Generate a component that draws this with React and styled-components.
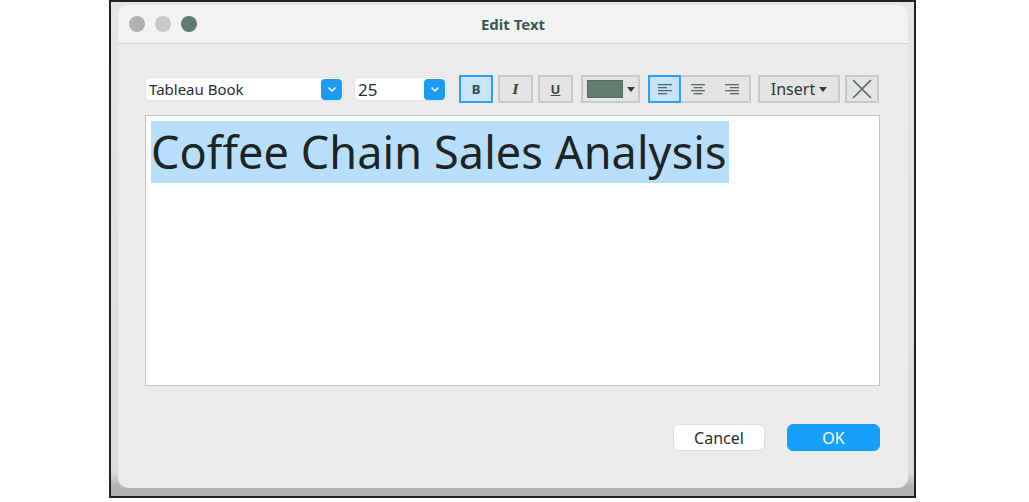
import React from "react";
import styled, { createGlobalStyle } from "styled-components";

const GlobalStyle = createGlobalStyle`
  body {
    margin: 0;
    background: #ffffff;
    font-family: "Noto Sans", "Open Sans", sans-serif;
  }
`;

const Page = styled.div`
  width: 1029px;
  height: 502px;
  padding-left: 109px;
  box-sizing: border-box;
  background: #ffffff;
`;

const Frame = styled.div`
  width: 807px;
  height: 498px;
  box-sizing: border-box;
  border: 2px solid #1f2322;
  padding: 3px 6px 8px 7px;
  background: linear-gradient(to bottom, #e6e6e6 0, #dcdcdc 470px, #b3b3b3 484px, #b3b3b3 100%);
`;

const Window = styled.div`
  height: 100%;
  border-radius: 10px;
  background: #ececec;
  overflow: hidden;
  display: flex;
  flex-direction: column;
`;

const TitleBar = styled.div`
  height: 38px;
  flex-shrink: 0;
  background: #f3f3f3;
  border-bottom: 1px solid #d2d2d2;
  display: flex;
  align-items: center;
  padding-left: 11px;
  position: relative;
`;

const Lights = styled.div`
  display: flex;
  gap: 10px;
`;

const Light = styled.span`
  width: 16px;
  height: 16px;
  border-radius: 50%;
  background: ${(p) => p.color};
`;

const Title = styled.div`
  position: absolute;
  left: 0;
  right: 0;
  text-align: center;
  font-size: 15px;
  font-weight: 700;
  color: #3b5a4f;
  pointer-events: none;
`;

const Body = styled.div`
  flex: 1;
  display: flex;
  flex-direction: column;
  padding: 31px 28px 0 27px;
`;

const Toolbar = styled.div`
  display: flex;
  align-items: center;
  height: 28px;
`;

const Select = styled.div`
  width: ${(p) => p.width}px;
  height: 24px;
  box-sizing: border-box;
  background: #ffffff;
  border-radius: 5px;
  border: 1px solid #e2e2e2;
  display: flex;
  align-items: center;
  justify-content: space-between;
  padding: 0 1px 0 3px;
  margin-right: ${(p) => p.gap}px;
  font-size: ${(p) => p.size || 15}px;
  color: #27302c;
`;

const Chevron = styled.span`
  width: 21px;
  height: 21px;
  border-radius: 4px;
  background: #1a9cf6;
  display: flex;
  align-items: center;
  justify-content: center;
`;

const ToolButton = styled.button`
  width: ${(p) => p.width || 35}px;
  height: 28px;
  box-sizing: border-box;
  margin: 0 ${(p) => p.gap || 0}px 0 0;
  padding: 0;
  border: 2px solid ${(p) => (p.active ? "#2f9ff4" : "#c9c9c9")};
  background: ${(p) => (p.active ? "#c6e4fb" : "#e4e4e4")};
  display: flex;
  align-items: center;
  justify-content: center;
  gap: 4px;
  font-family: "Noto Sans", sans-serif;
  font-size: 16px;
  color: #2c3a34;
`;

const Glyph = styled.span`
  font-size: 13px;
  font-weight: ${(p) => (p.bold ? 700 : 400)};
  font-style: ${(p) => (p.italic ? "italic" : "normal")};
  text-decoration: ${(p) => (p.underline ? "underline" : "none")};
  font-family: ${(p) => (p.italic ? '"DejaVu Serif", serif' : '"Noto Sans", sans-serif')};
  color: #3a4a44;
`;

const Swatch = styled.span`
  width: 36px;
  height: 18px;
  background: #607d70;
  border: 1px solid #55695f;
  box-sizing: border-box;
`;

const AlignGroup = styled.div`
  display: flex;
  height: 28px;
  box-sizing: border-box;
  border: 2px solid #c9c9c9;
  background: #e4e4e4;
  margin-right: 7px;
`;

const AlignCell = styled.span`
  width: ${(p) => (p.first ? 33 : 34)}px;
  height: 28px;
  margin: -2px 0;
  margin-left: ${(p) => (p.first ? "-2px" : "0")};
  box-sizing: border-box;
  display: flex;
  align-items: center;
  justify-content: center;
  border: 2px solid ${(p) => (p.active ? "#2f9ff4" : "transparent")};
  background: ${(p) => (p.active ? "#c6e4fb" : "transparent")};
`;

const Editor = styled.div`
  margin-top: 12px;
  height: 271px;
  box-sizing: border-box;
  background: #ffffff;
  border: 1px solid #c4c4c4;
  padding: 5px 5px;
`;

const Selected = styled.span`
  display: inline-block;
  background: #b7dffb;
  font-family: "Noto Sans", sans-serif;
  font-size: 45px;
  line-height: 62px;
  letter-spacing: 0.1px;
  color: #1f2422;
  padding-right: 2px;
`;

const Footer = styled.div`
  display: flex;
  justify-content: flex-end;
  gap: 22px;
  margin-top: 38px;
`;

const DialogButton = styled.button`
  width: ${(p) => p.width}px;
  height: 27px;
  border-radius: 6px;
  border: 1px solid ${(p) => (p.primary ? "#16a0fb" : "#dedede")};
  background: ${(p) => (p.primary ? "#16a0fb" : "#ffffff")};
  color: ${(p) => (p.primary ? "#ffffff" : "#27302c")};
  font-family: "Noto Sans", sans-serif;
  font-size: 16px;
  padding: 0;
`;

const ChevronIcon = () => (
  <svg width="10" height="7" viewBox="0 0 10 7">
    <path d="M2 2 L5 5 L8 2" stroke="#fff" strokeWidth="1.6" fill="none" strokeLinecap="round" strokeLinejoin="round" />
  </svg>
);

const Caret = () => (
  <svg width="8" height="5" viewBox="0 0 8 5">
    <path d="M0 0 H8 L4 5 Z" fill="#2c3a34" />
  </svg>
);

const AlignIcon = ({ type }) => {
  const rows = [
    { w: 14, y: 1 },
    { w: 9, y: 4 },
    { w: 14, y: 7 },
    { w: 9, y: 10 },
  ];
  return (
    <svg width="14" height="12" viewBox="0 0 14 12">
      {rows.map((r, i) => {
        const x = type === "left" ? 0 : type === "center" ? (14 - r.w) / 2 : 14 - r.w;
        return <rect key={i} x={x} y={r.y} width={r.w} height="1.3" fill="#5b6a63" />;
      })}
    </svg>
  );
};

const CloseIcon = () => (
  <svg width="22" height="20" viewBox="0 0 22 20">
    <path d="M2 1 L20 19 M20 1 L2 19" stroke="#55665e" strokeWidth="1.7" fill="none" />
  </svg>
);

export default function App() {
  return (
    <Page>
      <GlobalStyle />
      <Frame>
        <Window>
          <TitleBar>
            <Lights>
              <Light color="#b1b1b1" />
              <Light color="#c9c9c9" />
              <Light color="#5f7c6f" />
            </Lights>
            <Title>Edit Text</Title>
          </TitleBar>
          <Body>
            <Toolbar>
              <Select width={199} gap={10}>
                <span>Tableau Book</span>
                <Chevron><ChevronIcon /></Chevron>
              </Select>
              <Select width={93} gap={12} size={17}>
                <span>25</span>
                <Chevron><ChevronIcon /></Chevron>
              </Select>
              <ToolButton active width={34} gap={5}><Glyph bold>B</Glyph></ToolButton>
              <ToolButton gap={5}><Glyph italic bold>I</Glyph></ToolButton>
              <ToolButton gap={8}><Glyph underline bold>U</Glyph></ToolButton>
              <ToolButton width={59} gap={8}>
                <Swatch />
                <Caret />
              </ToolButton>
              <AlignGroup>
                <AlignCell first active><AlignIcon type="left" /></AlignCell>
                <AlignCell><AlignIcon type="center" /></AlignCell>
                <AlignCell><AlignIcon type="right" /></AlignCell>
              </AlignGroup>
              <ToolButton width={82} gap={5}>
                <span>Insert</span>
                <Caret />
              </ToolButton>
              <ToolButton width={34}><CloseIcon /></ToolButton>
            </Toolbar>
            <Editor>
              <Selected>Coffee Chain Sales Analysis</Selected>
            </Editor>
            <Footer>
              <DialogButton width={92}>Cancel</DialogButton>
              <DialogButton primary width={93}>OK</DialogButton>
            </Footer>
          </Body>
        </Window>
      </Frame>
    </Page>
  );
}
